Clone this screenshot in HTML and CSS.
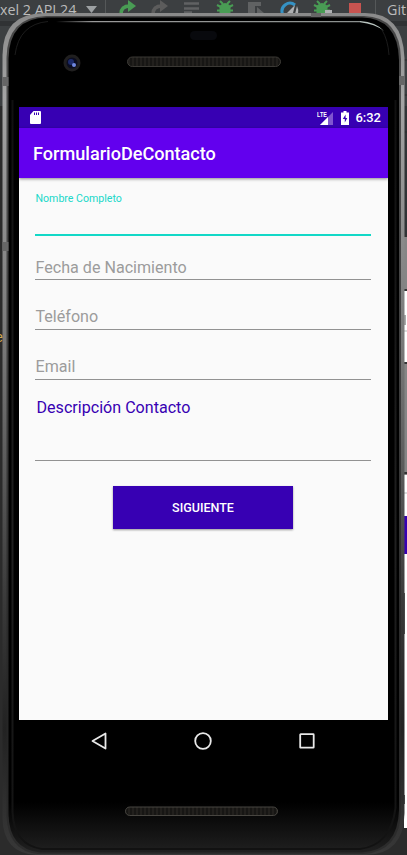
FILE: index.html
```html
<!DOCTYPE html>
<html lang="es">
<head>
<meta charset="utf-8">
<title>FormularioDeContacto</title>
<link rel="stylesheet" href="styles.css">
</head>
<body>
<div class="desktop">
  <div class="ide">
    <div class="toolbar">
      <span class="device">xel 2 API 24</span>
      <svg class="tools" width="407" height="26" viewBox="0 0 407 26">
        <path d="M86 6h11l-5.500 7z" fill="#9da1a3"/>
        <path d="M105.500 0v26M375.500 0v26" stroke="#555859"/>
        <path d="M121 14c0-5 3-8 9-8" fill="none" stroke="#499c54" stroke-width="3.500"/>
        <path d="M128 0l8 6-8 6z" fill="#499c54"/>
        <path d="M153 14c0-5 3-8 9-8" fill="none" stroke="#5c5c5c" stroke-width="3.500"/>
        <path d="M160 0l8 6-8 6z" fill="#5c5c5c"/>
        <path d="M184 3.500h15M184 8.500h15M184 12.500h8" stroke="#606263" stroke-width="2.500"/>
        <g id="bug"><path d="M219.500 6q5.500-6 11 0v8h-11z" fill="#499c54"/><path d="M217 5l4 2M233 5l-4 2M217 10.500h16M220 1l3 3M230 1l-3 3" stroke="#499c54" stroke-width="2"/></g>
        <path d="M248 2h13v4h-6v7h-7zM257 7l7 6h-7z" fill="#606263"/>
        <path d="M282.500 14a8 8 0 0 1 12.500-9" fill="none" stroke="#3592c4" stroke-width="3"/>
        <path d="M287 13l8-8-2 8zM297 6q2 4 1 8h-3z" fill="#afb1b3"/>
        <use href="#bug" x="97"/>
        <path d="M325 10h7v3h-7z" fill="#afb1b3"/>
        <path d="M349 3h12v12h-12z" fill="#c75450"/>
      </svg>
      <span class="git">Git</span>
    </div>
    <span class="code">e</span>
    <svg class="edge" width="3" height="855" viewBox="0 0 3 855">
      <path d="M0 106h3v130H0z" fill="#303335"/>
      <path d="M0 60h3M0 95h3M0 132h3" stroke="#2b2b2b"/>
      <path d="M0 290h3v538H0z" fill="#fff"/>
      <path d="M0 331h3M0 493h3" stroke="#bbb"/>
      <path d="M0 315h2v10H0z" fill="#aaa"/>
      <path d="M0 235h3v56H0zM0 363h3v112H0z" fill="#858585"/>
      <path d="M0 236h3M0 290h3M0 363h3M0 473h3" stroke="#333" stroke-width="2"/>
      <path d="M0 516h3v38H0z" fill="#3700b3"/>
      <path d="M0 593h1v41H0zM0 795h1v9H0z" fill="#555"/>
    </svg>
  </div>

  <svg class="shell" width="407" height="855" viewBox="0 0 407 855">
    <defs>
      <linearGradient id="metal" x1="0" y1="0" x2="0" y2="1">
        <stop offset="0" stop-color="#8a8a8a"/><stop offset=".1" stop-color="#a4a4a4"/>
        <stop offset=".4" stop-color="#777"/><stop offset=".7" stop-color="#3a3a3a"/>
        <stop offset=".85" stop-color="#222"/><stop offset="1" stop-color="#383838"/>
      </linearGradient>
      <linearGradient id="chin" x1="0" y1="0" x2="0" y2="1">
        <stop offset="0" stop-color="#000"/><stop offset=".94" stop-color="#000"/><stop offset="1" stop-color="#202020"/>
      </linearGradient>
      <pattern id="mesh" width="4" height="4" patternUnits="userSpaceOnUse">
        <path d="M0 0h4v4H0z" fill="#171614"/><path d="M1 0v4" stroke="#2c2925"/>
      </pattern>
      <linearGradient id="shine"><stop offset="0" stop-color="#999" stop-opacity="0"/><stop offset=".12" stop-color="#999"/><stop offset="1" stop-color="#8b908e"/></linearGradient>
      <linearGradient id="side" x1="0" y1="0" x2="0" y2="1"><stop offset="0" stop-color="#101010"/><stop offset=".6" stop-color="#202020"/><stop offset="1" stop-color="#121212"/></linearGradient>
    </defs>
    <path d="M2.500 55Q3 13 45 13H365Q403 13 404.500 58V813Q404 854 366 855H36Q3 853 2.500 818Z" fill="url(#metal)"/>
    <path d="M6.500 58Q7 17 46 16H364Q400 17 401 59V811Q400 851 364 854H38Q8 851 6.500 816Z" fill="#282828" opacity=".7"/>
    <path d="M8.500 59Q9 18 47 17.500H362Q398 18 399 60V810Q398 850 362 852.500H40Q9 849 8.500 814Z" fill="url(#chin)"/>
    <path d="M12.500 100V812Q14 845 42 849H360Q391 845 395.500 808V100" fill="none" stroke="url(#side)" stroke-width="2"/>
    <path d="M15 55Q19 24 48 21.500M389 55Q388 40 382 30" fill="none" stroke="#1c1c1c"/>
    <path d="M56 21H360V22.300H56z" fill="url(#shine)"/>
    <path d="M360 21Q376 22 384 31Q375 24 360 22.300z" fill="#b9c5c0"/>
    <path d="M2.500 77h6v9h-6zM2.500 242h6v9h-6zM399 76h5.500v9H399zM311 13h10v4h-10z" fill="#666"/>
    <rect x="190" y="31" width="27" height="9" rx="4.500" fill="#08090d"/>
    <circle cx="72" cy="63" r="8.500" fill="#201f1f"/><circle cx="72" cy="63" r="5.500" fill="#0b0d20"/>
    <circle cx="71" cy="62" r="3" fill="#1c2a68"/><circle cx="74" cy="65" r="2" fill="#7188e0"/>
    <rect x="127.500" y="57" width="153" height="9.500" rx="4.750" fill="url(#mesh)" stroke="#3b3935"/>
    <rect x="125.500" y="807" width="152" height="8.500" rx="4.250" fill="url(#mesh)" stroke="#474540"/>
  </svg>

  <main class="screen">
    <div class="status">
      <svg class="sd" width="11" height="13" viewBox="0 0 11 13"><path d="M3.500 0H10q1 0 1 1v11q0 1-1 1H1q-1 0-1-1V4z" fill="#fff"/><path d="M4.500 1.500v2.500M6.500 1.500v2.500M8.500 1.500v2.500" stroke="#3700b3"/></svg>
      <div class="indicators">
        <div class="signal">
          <span class="lte">LTE</span>
          <svg width="13" height="13" viewBox="0 0 13 13"><path d="M13 0v13H0z" fill="#8055d0"/><path d="M8 5v8H0z" fill="#fff"/></svg>
        </div>
        <svg class="battery" width="8" height="14" viewBox="0 0 8 14"><path d="M2.500 0h3v1.500H8V14H0V1.500h2.500z" fill="#fff"/><path d="M4.600 3.500L1.800 8h2v3.500L6.300 7H4.600z" fill="#3700b3"/></svg>
        <span class="time">6:32</span>
      </div>
    </div>
    <header class="appbar">FormularioDeContacto</header>
    <form class="form">
      <div class="field focused"><label>Nombre Completo</label></div>
      <div class="field date"><label>Fecha de Nacimiento</label></div>
      <div class="field phone"><label>Teléfono</label></div>
      <div class="field email"><label>Email</label></div>
      <div class="field description"><label>Descripción Contacto</label></div>
      <button class="next" type="button">SIGUIENTE</button>
    </form>
  </main>
  <nav class="nav">
    <svg width="16" height="18" viewBox="0 0 16 18"><path d="M14.500 1.500v15L1.500 9z"/></svg>
    <svg width="18" height="18" viewBox="0 0 18 18"><circle cx="9" cy="9" r="7.800"/></svg>
    <svg width="16" height="16" viewBox="0 0 16 16"><rect x="1.200" y="1.200" width="13.500" height="13.500" rx=".5"/></svg>
  </nav>
</div>
</body>
</html>
```

FILE: styles.css
```css
* { box-sizing: border-box; }
body { margin: 0; font-family: Roboto, sans-serif; }
.desktop {
  position: relative;
  width: 407px;
  height: 855px;
  overflow: hidden;
  padding: 107px 19px 0;
  background: #2b2b2b;
}
.ide { position: absolute; inset: 0; }
.toolbar {
  position: relative;
  display: flex;
  justify-content: space-between;
  height: 106px;
  background: linear-gradient(#3c3f41 0 21px, #303234 21px 26px, #3c3f41 26px);
  color: #bbb;
  font: 14.3px/20px "Open Sans", "Noto Sans", sans-serif;
  white-space: nowrap;
}
.tools { position: absolute; left: 0; top: 0; }
.git { width: 20px; }
.code { position: absolute; left: -5px; top: 330px; color: #d5a84f; font: 14px/16px "Liberation Mono", monospace; }
.edge { position: absolute; right: 0; top: 0; }
.shell { position: absolute; left: 0; top: 0; }

.screen {
  position: relative;
  height: 612.5px;
  background: #fafafa;
}
.status {
  display: flex;
  align-items: center;
  justify-content: space-between;
  height: 21px;
  padding: 0 7px 0 10.5px;
  background: #3700b3;
  color: #fff;
}
.indicators { display: flex; align-items: center; }
.signal { display: flex; align-items: flex-end; height: 14px; }
.lte { align-self: flex-start; width: 4px; margin-right: -1px; font: 700 7.5px/7px "Liberation Sans", sans-serif; transform: scaleX(.72); transform-origin: left; }
.battery { margin: 0 6px 0 8px; }
.time { font-size: 13px; font-weight: 500; line-height: 21px; }
.appbar {
  height: 50px;
  padding-left: 14px;
  background: #6200ee;
  color: #fff;
  font-size: 18.1px;
  font-weight: 500;
  line-height: 52px;
  box-shadow: 0 1px 3px rgba(0, 0, 0, .45);
}
.form { display: flex; flex-direction: column; padding: 0 17px 0 16px; }
.field {
  display: flex;
  align-items: flex-end;
  height: 50px;
  padding: 0 0 2px .5px;
  border-bottom: 1px solid #929292;
  color: #9c9c9c;
  font-size: 16.1px;
  line-height: 19px;
}
.field.focused {
  align-items: flex-start;
  height: 58px;
  padding-top: 11px;
  border-bottom: 2px solid #12d8c7;
  color: #20d8c9;
  font-size: 10.6px;
}
.field.date { height: 44px; }
.field.phone, .field.email { padding-bottom: 3px; }
.field.description {
  align-items: flex-start;
  height: 81px;
  padding: 18px 0 0 1.5px;
  color: #3700b3;
}
.next {
  align-self: center;
  width: 180px;
  height: 43px;
  margin: 25px 0 0 0;
  padding: 0;
  border: 0;
  background: #3700b3;
  color: #fff;
  font: 500 12.5px Roboto, sans-serif;
  box-shadow: 0 1px 2px rgba(0, 0, 0, .4);
}
.nav {
  position: relative;
  display: flex;
  align-items: center;
  justify-content: space-between;
  height: 43px;
  padding: 0 73px 0 72px;
}
.nav svg { fill: none; stroke: #e8e8e8; stroke-width: 1.8; stroke-linejoin: round; }
```
